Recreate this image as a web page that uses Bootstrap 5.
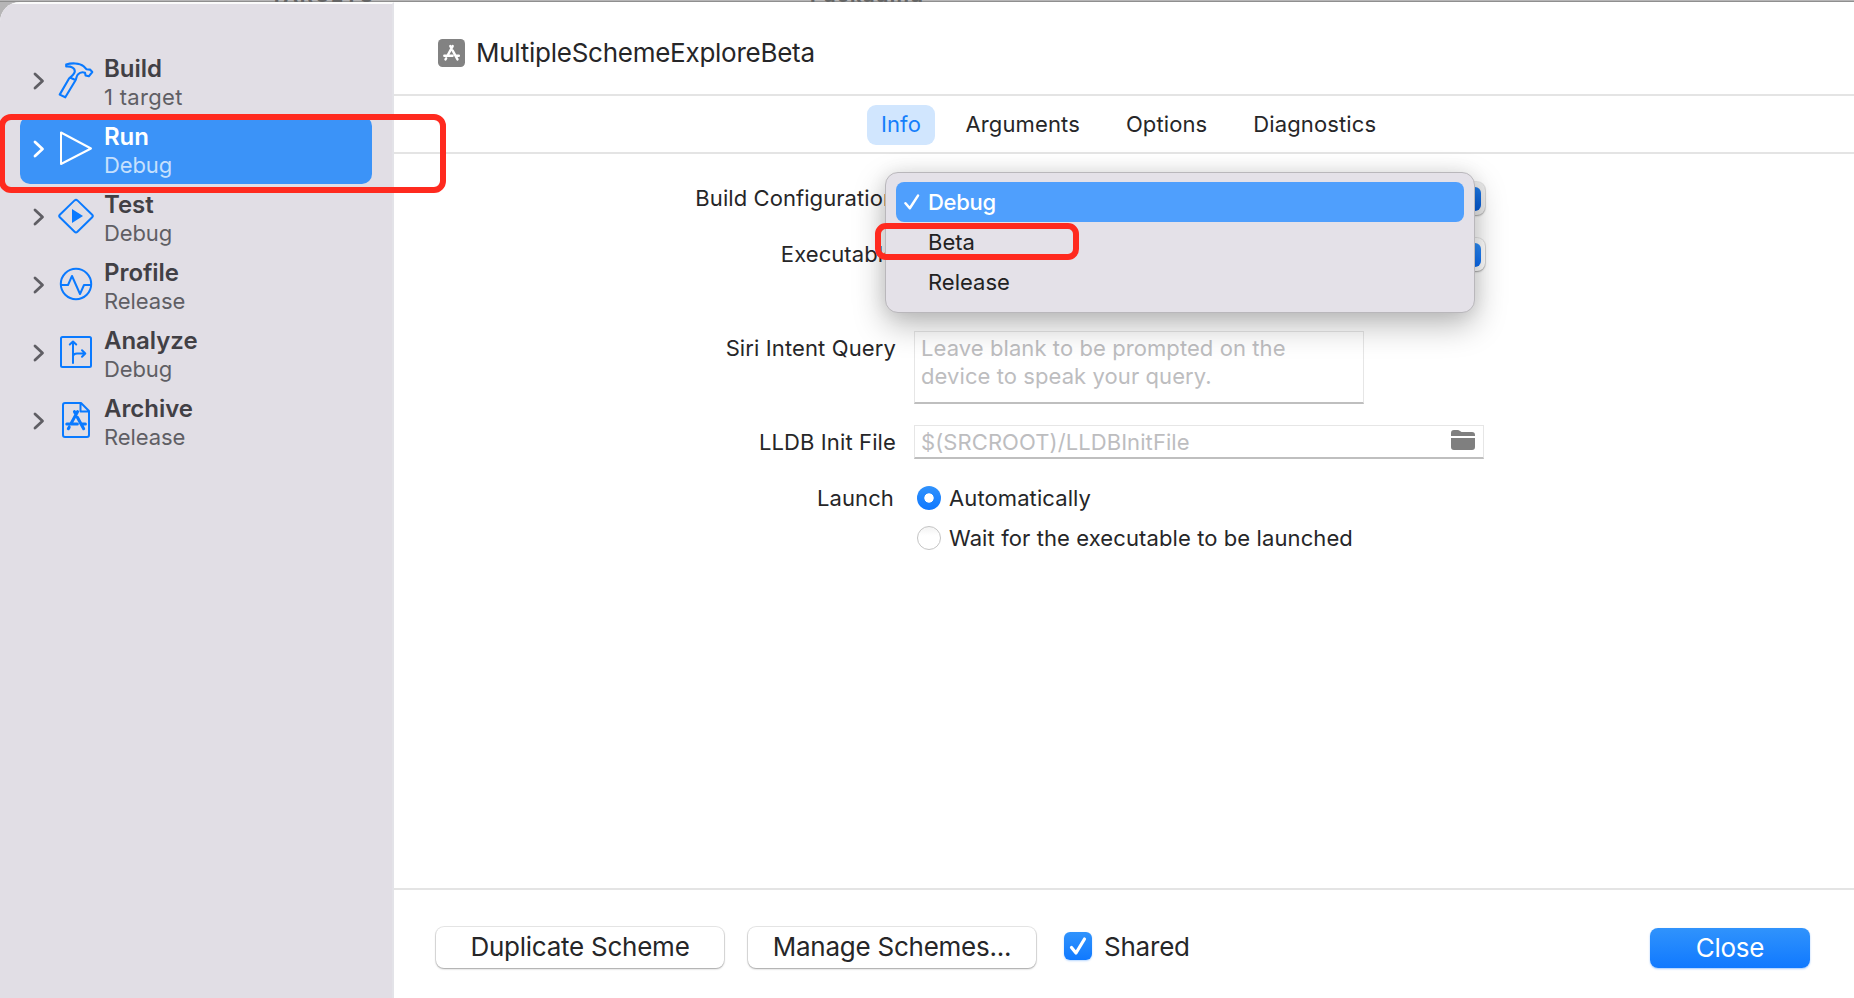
<!DOCTYPE html>
<html lang="en">
<head>
<meta charset="utf-8">
<meta name="viewport" content="width=device-width, initial-scale=1">
<title>MultipleSchemeExploreBeta</title>
<link href="https://cdn.jsdelivr.net/npm/bootstrap@5.3.0/dist/css/bootstrap.min.css" rel="stylesheet">
<style>
:root{--ink:#262628;--blue:#0a7aff;--rule:#e4e4e4;--mark:#ff2a1f}
body{font-family:Inter,"Liberation Sans",sans-serif;font-size:22px;line-height:28px;letter-spacing:.12px;color:var(--ink);background:#b6b5b6;overflow:hidden}
svg{display:block;flex:none}
.backdrop{height:2px;font-size:20px;font-weight:700;line-height:20px;color:#656565;border-bottom:1px solid #8f8f8f}
.backdrop span{margin-top:-15px}
.bd-a{width:810px;padding-left:270px;letter-spacing:1.6px}
.bd-b{letter-spacing:1.3px}
.sheet{border-radius:20px 0 0 0;overflow:hidden;background:#fff;position:relative}
.sidebar{width:394px;background:#e1dee5;border-top:2px solid #fbfbfb;border-right:2px solid #e3e3e8;padding:44px 20px 0}
.step{height:68px;width:352px;padding:0 0 0 12px;color:#5f5e64;border-radius:10px;border:0;background:none}
.step .chev{width:12px;margin:0 12.5px 2px .5px}
.step .ico{width:38px;margin:0 9px 2px 0;color:var(--blue)}
.step .txt{padding-top:2px}
.step b{display:block;font-size:24px;font-weight:600;letter-spacing:-.05px;color:#414045}
.step small{display:block;font-size:22px;letter-spacing:-.1px}
.step .wide{letter-spacing:.3px}
.step.active{background:#3b93f8;color:#fff}
.step.active .ico,.step.active b{color:#fff}
.step.active small{color:#c6e0fd}
.ring{position:absolute;border:6px solid var(--mark);pointer-events:none}
.ring-run{left:-1px;top:114px;width:447px;height:79px;border-radius:12px;z-index:5}
.ring-beta{left:-11px;top:50px;width:204px;height:37px;border-radius:11px}
.head{height:94px;padding:9px 0 0 44px;border-bottom:2px solid var(--rule);font-size:26px;letter-spacing:-.26px;gap:11px}
.tabs{height:58px;padding-left:473px;gap:18px;border-bottom:2px solid var(--rule)}
.tabs .nav-link{height:40px;padding:5px 14px 7px;color:var(--ink);border-radius:9px;margin-top:1px;letter-spacing:.12px}
.tabs .nav-link.active{background:#d1e6fe;color:#157efb;width:68px;padding-left:0;padding-right:0;text-align:center;margin-right:-1.5px}
.form-area{padding-top:24px}
.lab{width:502px;margin-right:18px;text-align:right;white-space:nowrap}
.frow{min-height:40px}
.frow .lab{letter-spacing:.07px}
.popup{width:571px;height:33px;border-radius:8px;background:#fff;box-shadow:0 0 0 1px rgba(0,0,0,.08),0 1px 2px rgba(0,0,0,.3);padding:5px 4px 4px}
.popup i{width:24px;height:24px;border-radius:6px;background:linear-gradient(#2f8ffa,#0a6cf5)}
.popup.open{background:#ececec}
.popup.open i{background:linear-gradient(#1f7ae6,#0459d6)}
.field{border:1px solid #e6e6e6;border-bottom:2px solid #bfbfbf;color:#bdbdbf;padding-left:6px;letter-spacing:.08px}
.field-area{width:450px;height:73px;padding-top:2px}
.field-line{width:570px;height:34px;padding-right:8px}
.field-line svg{margin-bottom:3px}
.choice{height:40px;padding-left:3px;gap:8px;letter-spacing:.1px}
.dot{width:24px;height:24px;border-radius:50%;border:1px solid #c4c4c4;background:linear-gradient(#f3f3f3,#fff 40%)}
.dot.on{border:0;background:radial-gradient(circle,#fff 4.3px,transparent 5px),linear-gradient(#3092fc,#0f78ff)}
.menu{position:absolute;left:-29px;top:-10px;width:590px;height:141px;border:1px solid #b9b7bb;border-radius:13px;background:#e4e1e8;padding:9px 10px 0 10px;box-shadow:0 12px 32px rgba(0,0,0,.28),0 0 18px rgba(0,0,0,.08);z-index:3}
.menu .dropdown-item{height:40px;padding:6px 0 6px 8px;border-radius:8px;color:#222;gap:8px;letter-spacing:0}
.menu .dropdown-item.active{background:#4f9ffd;color:#fff;font-weight:500;letter-spacing:-.3px}
.menu .tick{width:16px}
.foot{height:110px;border-top:2px solid var(--rule);padding:6px 44px 0 42px;font-size:26px;letter-spacing:-.22px}
.foot .btn{height:41px;border:0;padding:0;border-radius:8px;font-size:26px;line-height:40px;letter-spacing:-.25px;color:var(--ink);background:#fff}
.btn-plain{width:288px;margin-right:24px;box-shadow:0 0 0 1px rgba(0,0,0,.09),0 1px 2px rgba(0,0,0,.3)}
.foot .btn-close-sheet{width:160px;height:40px;line-height:38px;margin-top:1px;color:#fff;background:linear-gradient(#3093fc,#1079ff);box-shadow:0 1px 2px rgba(16,121,255,.4)}
.check{width:28px;height:28px;border-radius:6px;background:linear-gradient(#3093fc,#1079ff);margin:0 12px 2px 4px;box-shadow:0 1px 2px rgba(16,121,255,.3)}
</style>
</head>
<body class="vh-100 d-flex flex-column position-relative">
<svg width="0" height="0" class="position-absolute">
  <symbol id="chev" viewBox="0 0 12 18"><path d="M2 2l7.500 7L2 16" fill="none" stroke="currentColor" stroke-width="2.800" stroke-linecap="round" stroke-linejoin="round"/></symbol>
  <symbol id="store" viewBox="0 0 24 24"><g fill="none" stroke="currentColor" stroke-width="3.200" stroke-linecap="round"><path d="M13.600 2.800L6.900 15M10.400 2.800L12 5.600M13.400 8.600L20 20.600M2.400 15.600H13.400M18 15.600H21.800M4.900 19L4 20.600"/></g></symbol>
</svg>

<div class="backdrop d-flex flex-shrink-0"><span class="bd-a">TARGETS</span><span class="bd-b">Packaging</span></div>

<div class="sheet d-flex flex-grow-1">
  <aside class="sidebar flex-shrink-0">
    <div class="step d-flex align-items-center">
      <svg class="chev" height="18"><use href="#chev"/></svg>
      <svg class="ico" height="38" viewBox="0 0 38 38" fill="none" stroke="currentColor" stroke-width="2.100" stroke-linejoin="round"><path d="M9.200 2.600C14 .9 22.500 .7 26.600 4.300L29.500 7.200 33 7.600 35.300 10 31.800 14.300 28.600 13.400 28 10.800C25.500 9.800 22.500 10.700 20.600 12.800 19.200 14.500 19.600 16.400 18.400 18.500L8.300 35.300 2.700 32.600 12.200 16.300C14.800 14.300 17 12.400 17.800 9.600 18 6.200 14.500 4.100 9.200 4.400ZM13.500 15.800L18.300 18"/></svg>
      <div class="txt"><b>Build</b><small class="wide">1 target</small></div>
    </div>
    <div class="step active d-flex align-items-center">
      <svg class="chev" height="18"><use href="#chev"/></svg>
      <svg class="ico" height="38" viewBox="0 0 38 38" fill="none" stroke="currentColor" stroke-width="2" stroke-linejoin="round"><path d="M4 2.500V34L34 18.500Z"/></svg>
      <div class="txt"><b>Run</b><small>Debug</small></div>
    </div>
    <div class="step d-flex align-items-center">
      <svg class="chev" height="18"><use href="#chev"/></svg>
      <svg class="ico" height="38" viewBox="0 0 38 38" fill="none" stroke="currentColor" stroke-width="2" stroke-linejoin="round"><path d="M17.600 2.400Q19 1.200 20.400 2.400L35.200 16.800Q36.400 18 35.200 19.200L20.400 33.800Q19 35 17.600 33.800L2.800 19.200Q1.600 18 2.800 16.800Z"/><path d="M15 11V25L26 18Z" fill="currentColor" stroke="none"/></svg>
      <div class="txt"><b>Test</b><small>Debug</small></div>
    </div>
    <div class="step d-flex align-items-center">
      <svg class="chev" height="18"><use href="#chev"/></svg>
      <svg class="ico" height="38" viewBox="0 0 38 38" fill="none" stroke="currentColor" stroke-width="2" stroke-linejoin="round"><circle cx="19" cy="18" r="15.200"/><path d="M4 19H11L15 10 23 28 27 19H34"/></svg>
      <div class="txt"><b>Profile</b><small>Release</small></div>
    </div>
    <div class="step d-flex align-items-center">
      <svg class="chev" height="18"><use href="#chev"/></svg>
      <svg class="ico" height="38" viewBox="0 0 38 38" fill="none" stroke="currentColor" stroke-width="2" stroke-linejoin="round" stroke-linecap="round"><rect x="4" y="3" width="30" height="30" rx="1.500"/><path d="M16 29V8M12.800 10.500L16 7.500 19.200 10.500M16 22Q16.500 19.500 20 19.500H28M25 16.300L28.300 19.500 25 22.700"/></svg>
      <div class="txt"><b>Analyze</b><small>Debug</small></div>
    </div>
    <div class="step d-flex align-items-center">
      <svg class="chev" height="18"><use href="#chev"/></svg>
      <svg class="ico" height="38" viewBox="0 0 38 38" fill="none" stroke="currentColor" stroke-width="2" stroke-linejoin="round"><path d="M8 1H24L32 9V33Q32 35 30 35H8Q6 35 6 33V3Q6 1 8 1ZM23.500 1V9.500H32"/><svg x="7.500" y="7" width="23" height="23"><use href="#store"/></svg></svg>
      <div class="txt"><b>Archive</b><small>Release</small></div>
    </div>
  </aside>

  <main class="flex-grow-1 d-flex flex-column">
    <header class="head d-flex align-items-center">
      <svg width="27" height="28" viewBox="0 0 27 28"><rect width="27" height="28" rx="4.500" fill="#828282"/><svg x="4.500" y="5" width="18" height="18" color="#fff"><use href="#store"/></svg></svg>
      <span>MultipleSchemeExploreBeta</span>
    </header>
    <nav class="tabs nav flex-nowrap align-items-center">
      <a class="nav-link active">Info</a>
      <a class="nav-link">Arguments</a>
      <a class="nav-link">Options</a>
      <a class="nav-link">Diagnostics</a>
    </nav>

    <section class="form-area flex-grow-1">
      <div class="frow d-flex align-items-center">
        <div class="lab">Build Configuration</div>
        <div class="position-relative">
          <div class="popup open d-flex justify-content-end"><i></i></div>
          <div class="menu">
            <div class="dropdown-item active d-flex align-items-center">
              <svg class="tick" height="18" viewBox="0 0 16 18"><path d="M1.500 10.200L5.800 15.300 14 2.600" fill="none" stroke="#fff" stroke-width="2.500" stroke-linecap="round" stroke-linejoin="round"/></svg>Debug
            </div>
            <div class="dropdown-item d-flex align-items-center"><span class="tick"></span>Beta</div>
            <div class="dropdown-item d-flex align-items-center"><span class="tick"></span>Release</div>
            <div class="ring ring-beta"></div>
          </div>
        </div>
      </div>
      <div class="frow d-flex align-items-center mt-3">
        <div class="lab">Executable</div>
        <div class="popup d-flex justify-content-end"><i></i></div>
      </div>
      <div class="d-flex" style="margin-top:57px">
        <div class="lab" style="padding-top:3px">Siri Intent Query</div>
        <div class="field field-area">Leave blank to be prompted on the<br>device to speak your query.</div>
      </div>
      <div class="d-flex align-items-center" style="margin-top:21px">
        <div class="lab">LLDB Init File</div>
        <div class="field field-line d-flex align-items-center justify-content-between">$(SRCROOT)/LLDBInitFile
          <svg width="24" height="20" viewBox="0 0 24 20" fill="#7f7f7f"><path d="M0 6V3Q0 0 3 0H6.500Q8 0 9 1L10.500 2H21Q24 2 24 5V6ZM0 8H24V17Q24 20 21 20H3Q0 20 0 17Z"/></svg>
        </div>
      </div>
      <div class="d-flex" style="margin-top:19px">
        <div class="lab" style="padding:6px 2px 0 0">Launch</div>
        <div>
          <div class="choice d-flex align-items-center"><span class="dot on"></span>Automatically</div>
          <div class="choice d-flex align-items-center"><span class="dot"></span>Wait for the executable to be launched</div>
        </div>
      </div>
    </section>

    <footer class="foot d-flex align-items-center">
      <button class="btn btn-plain">Duplicate Scheme</button>
      <button class="btn btn-plain">Manage Schemes...</button>
      <span class="check d-flex align-items-center justify-content-center"><svg width="18" height="20" viewBox="0 0 18 20"><path d="M2.500 11.500L7 17 15.500 3" fill="none" stroke="#fff" stroke-width="3.200" stroke-linecap="round" stroke-linejoin="round"/></svg></span>
      <span>Shared</span>
      <button class="btn btn-close-sheet ms-auto">Close</button>
    </footer>
  </main>
</div>
<div class="ring ring-run"></div>
<script src="https://cdn.jsdelivr.net/npm/bootstrap@5.3.0/dist/js/bootstrap.bundle.min.js"></script>
</body>
</html>
